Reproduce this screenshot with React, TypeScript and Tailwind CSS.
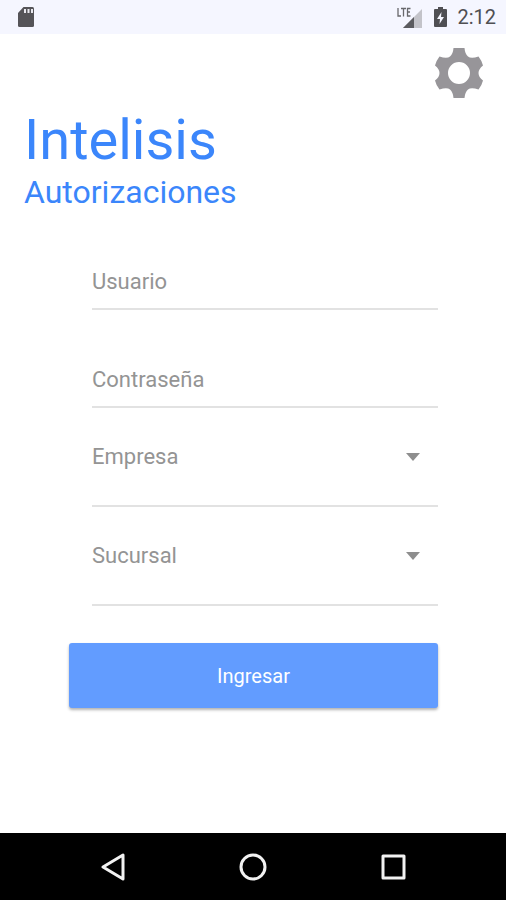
import { useState } from 'react';

function StatusBar() {
  return (
    <header className="flex h-[34px] items-center justify-between bg-[#f5f6ff] pr-[10px] pl-[18px] text-[#4f4f53]">
      <svg width="17" height="20" viewBox="0 0 17 20" aria-hidden="true">
        <path d="M5.500 0H14.500Q16 0 16 1.500V18.500Q16 20 14.500 20H1.500Q0 20 0 18.500V6Z" fill="#555458" />
        <path d="M6 2H8V6H6ZM9.500 2H11.500V6H9.500ZM13 2H15V6H13Z" fill="#e9e9f0" />
      </svg>

      <div className="flex items-center">
        <svg width="26" height="22" viewBox="0 0 26 22" aria-hidden="true">
          <path d="M25 3V22H6Z" fill="#c3c3c9" />
          <path d="M17 11V22H6Z" fill="#5b5b5f" />
          <path d="M1 2V10H4M4 2.500H9M6.500 2.500V10.500M13.500 2.500H10.500V10H13.500M10.500 6H13" fill="none" stroke="#68686c" strokeWidth="1.300" />
        </svg>
        <svg className="ml-[11px]" width="13" height="20" viewBox="0 0 13 20" aria-hidden="true">
          <path d="M4 0H9V2H12Q13 2 13 3V19Q13 20 12 20H1Q0 20 0 19V3Q0 2 1 2H4Z" fill="#4f4f53" />
          <path d="M7.500 5L3 12H6L5.500 17L10 10H7Z" fill="#f5f6ff" />
        </svg>
        <span className="ml-[10px] text-[20px] leading-[34px]">2:12</span>
      </div>
    </header>
  )
}

function SelectField({ id, label }: { id: string; label: string }) {
  return (
    <div className="relative ml-[23px]">
      <select
        id={id}
        aria-label={label}
        defaultValue=""
        className="block h-[99px] w-full appearance-none border-b-2 border-[#e2e2e2] bg-transparent text-[22px] text-[#949494] focus:outline-none"
      >
        <option value="">{label}</option>
      </select>
      <svg className="pointer-events-none absolute top-[45px] right-[18px]" width="14" height="8" viewBox="0 0 14 8" aria-hidden="true">
        <path d="M0 0H14L7 8Z" fill="#8e8e8e" />
      </svg>
    </div>
  )
}

export default function App() {
  const [ user, setUser ] = useState('');
  const [ password, setPassword ] = useState('');

  return (
    <div className="flex min-h-screen flex-col bg-white font-[Roboto,sans-serif]">
      <StatusBar />

      <main className="flex-1">
        <div className="flex justify-end pt-[13px] pr-[22px]">
          <button type="button" aria-label="Configuración">
            <svg className="block" width="50" height="52" viewBox="0 0 50 52" aria-hidden="true">
              <path
                fillRule="evenodd"
                fill="#979599"
                d="M19.500 1H30.500Q31 7 34 9.500Q37 12 44.500 9.500Q48 14 49 18.500Q44.500 22 44.500 26Q44.500 30 49 33.500Q48 38 44.500 42.500Q37 40 34 42.500Q31 45 30.500 51H19.500Q19 45 16 42.500Q13 40 5.500 42.500Q2 38 1 33.500Q5.500 30 5.500 26Q5.500 22 1 18.500Q2 14 5.500 9.500Q13 12 16 9.500Q19 7 19.500 1ZM25 15A11 11 0 1 0 25 37A11 11 0 1 0 25 15Z"
              />
            </svg>
          </button>
        </div>

        <div className="px-6 pt-[9px] text-[#3b86fb]">
          <h1 className="text-[56px] leading-[64px]">Intelisis</h1>
          <p className="text-[32px] leading-[40px]">Autorizaciones</p>
        </div>

        <form
          className="pt-[42px] pr-[68px] pl-[69px]"
          onSubmit={e => e.preventDefault()}
        >
          <input
            className="ml-[23px] block h-[56px] w-[calc(100%-23px)] border-b-2 border-[#e2e2e2] text-[22px] text-[#666666] placeholder-[#949494] focus:outline-none"
            type="text"
            aria-label="Usuario"
            placeholder="Usuario"
            value={user}
            onChange={e => setUser(e.target.value)}
          />
          <input
            className="mt-[42px] ml-[23px] block h-[56px] w-[calc(100%-23px)] border-b-2 border-[#e2e2e2] text-[22px] text-[#666666] placeholder-[#949494] focus:outline-none"
            type="password"
            aria-label="Contraseña"
            placeholder="Contraseña"
            value={password}
            onChange={e => setPassword(e.target.value)}
          />
          <SelectField id="empresa" label="Empresa" />
          <SelectField id="sucursal" label="Sucursal" />

          <button
            type="submit"
            className="mt-[37px] h-[65px] w-full rounded-[3px] bg-[#629cff] text-[20px] text-white shadow-[0_2px_3px_rgba(0,0,0,0.3)]"
          >
            Ingresar
          </button>
        </form>
      </main>

      <nav className="flex h-[67px] items-center justify-center gap-[112px] bg-black" aria-label="Sistema">
        <button type="button" aria-label="Atrás">
          <svg className="block" width="28" height="28" viewBox="0 0 28 28" fill="none" stroke="#f2f2f2" strokeWidth="3" strokeLinejoin="round" aria-hidden="true">
            <path d="M24 2V26L4 14Z" />
          </svg>
        </button>
        <button type="button" aria-label="Inicio">
          <svg className="block" width="28" height="28" viewBox="0 0 28 28" fill="none" stroke="#f2f2f2" strokeWidth="3" aria-hidden="true">
            <circle cx="14" cy="14" r="12" />
          </svg>
        </button>
        <button type="button" aria-label="Recientes">
          <svg className="block" width="28" height="28" viewBox="0 0 28 28" fill="none" stroke="#f2f2f2" strokeWidth="3" strokeLinejoin="round" aria-hidden="true">
            <path d="M4 3H25V25H4Z" />
          </svg>
        </button>
      </nav>
    </div>
  )
}
